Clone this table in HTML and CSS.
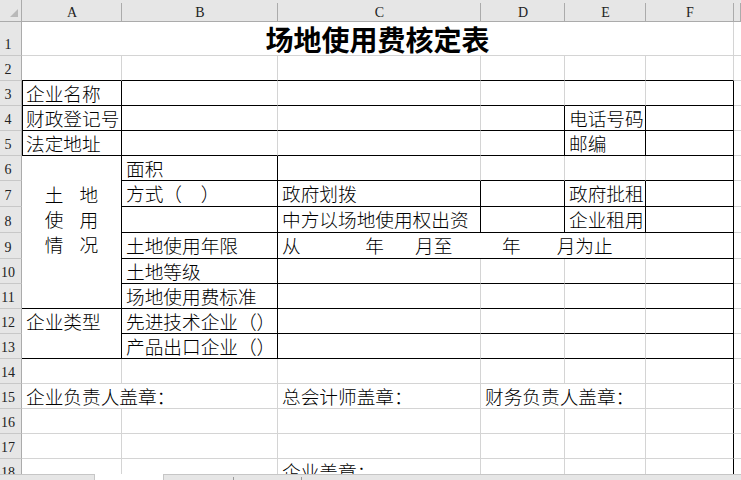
FILE: index.html
```html
<!DOCTYPE html>
<html lang="zh">
<head>
<meta charset="utf-8">
<title>场地使用费核定表</title>
<link rel="stylesheet" href="styles.css">
</head>
<body>
<div class="sheet">
  <div class="grid">
    <div class="corner"><svg width="21" height="21" viewBox="0 0 21 21"><polygon points="18,9 18,17 10,17" fill="#b9b9b9"/></svg></div>
    <div class="ch">A</div><div class="ch">B</div><div class="ch">C</div><div class="ch">D</div><div class="ch">E</div><div class="ch">F</div><div class="ch"></div>

    <div class="rh">1</div>
    <div class="c title">场地使用费核定表</div>
    <div class="c g"></div>

    <div class="rh">2</div>
    <div class="c b"></div><div class="c b"></div><div class="c b"></div><div class="c b"></div><div class="c b"></div><div class="c b"></div><div class="c g"></div>

    <div class="rh">3</div>
    <div class="c l r b">企业名称</div><div class="c b"></div><div class="c b"></div><div class="c b"></div><div class="c b"></div><div class="c r b"></div><div class="c g"></div>

    <div class="rh">4</div>
    <div class="c l r b">财政登记号</div><div class="c b"></div><div class="c b"></div><div class="c r b"></div><div class="c r b">电话号码</div><div class="c r b"></div><div class="c g"></div>

    <div class="rh">5</div>
    <div class="c l r b">法定地址</div><div class="c b"></div><div class="c b"></div><div class="c r b"></div><div class="c r b">邮编</div><div class="c r b"></div><div class="c g"></div>

    <div class="rh">6</div>
    <div class="c r b land">
      <div class="pair"><span>土</span><span>地</span></div>
      <div class="pair"><span>使</span><span>用</span></div>
      <div class="pair"><span>情</span><span>况</span></div>
    </div>
    <div class="c r b">面积</div><div class="c b"></div><div class="c b"></div><div class="c b"></div><div class="c r b"></div><div class="c g"></div>

    <div class="rh">7</div>
    <div class="c r b">方式（　）</div><div class="c r b">政府划拨</div><div class="c r b"></div><div class="c r b">政府批租</div><div class="c r b"></div><div class="c g"></div>

    <div class="rh">8</div>
    <div class="c r b"></div><div class="c r b">中方以场地使用权出资</div><div class="c r b"></div><div class="c r b">企业租用</div><div class="c r b"></div><div class="c g"></div>

    <div class="rh">9</div>
    <div class="c r b">土地使用年限</div>
    <div class="c b span3 period"><span>从</span><span class="p1">年</span><span class="p2">月至</span><span class="p3">年</span><span class="p4">月为止</span></div>
    <div class="c r b"></div><div class="c g"></div>

    <div class="rh">10</div>
    <div class="c r b">土地等级</div><div class="c b"></div><div class="c b"></div><div class="c b"></div><div class="c r b"></div><div class="c g"></div>

    <div class="rh">11</div>
    <div class="c r b">场地使用费标准</div><div class="c b"></div><div class="c b"></div><div class="c b"></div><div class="c r b"></div><div class="c g"></div>

    <div class="rh">12</div>
    <div class="c r b type">企业类型</div>
    <div class="c r b">先进技术企业（）</div><div class="c b"></div><div class="c b"></div><div class="c b"></div><div class="c r b"></div><div class="c g"></div>

    <div class="rh">13</div>
    <div class="c r b">产品出口企业（）</div><div class="c b"></div><div class="c b"></div><div class="c b"></div><div class="c r b"></div><div class="c g"></div>

    <div class="rh">14</div>
    <div class="c"></div><div class="c"></div><div class="c"></div><div class="c"></div><div class="c"></div><div class="c r"></div><div class="c g"></div>

    <div class="rh">15</div>
    <div class="c span2">企业负责人盖章：</div><div class="c">总会计师盖章：</div><div class="c span2">财务负责人盖章：</div><div class="c r"></div><div class="c g"></div>

    <div class="rh">16</div>
    <div class="c"></div><div class="c"></div><div class="c"></div><div class="c"></div><div class="c"></div><div class="c r"></div><div class="c g"></div>

    <div class="rh">17</div>
    <div class="c"></div><div class="c"></div><div class="c"></div><div class="c"></div><div class="c"></div><div class="c r"></div><div class="c g"></div>

    <div class="rh">18</div>
    <div class="c"></div><div class="c"></div><div class="c">企业盖章：</div><div class="c"></div><div class="c"></div><div class="c r"></div><div class="c g"></div>
  </div>
</div>
<div class="footer">
  <div class="f-left"></div>
  <div class="f-gap"></div>
  <div class="f-right"><span class="tick t1"></span><span class="tick t2"></span></div>
</div>
</body>
</html>
```

FILE: styles.css
```css
* {
  box-sizing: border-box;
  margin: 0;
  padding: 0;
}

html, body {
  width: 741px;
  height: 480px;
  overflow: hidden;
  background: #ffffff;
}

body {
  font-family: "Noto Sans CJK SC", "Noto Sans CJK JP", sans-serif;
  color: #000;
}

.sheet {
  height: 474px;
  overflow: hidden;
}

.grid {
  display: grid;
  grid-template-columns: 22px 100px 156px 203px 84px 81px 88px 7px;
  grid-template-rows: 22px 34px repeat(5, 25px) repeat(3, 26px) repeat(9, 25px);
}

.corner {
  background: #e6e6e6;
  border-right: 1px solid #ababab;
  border-bottom: 1px solid #ababab;
}

.corner svg {
  display: block;
}

.ch {
  background-color: #e6e6e6;
  background-image: linear-gradient(#ababab, #ababab);
  background-size: 1px 18px;
  background-position: right bottom;
  background-repeat: no-repeat;
  border-bottom: 1px solid #ababab;
  font-family: "Liberation Serif", serif;
  font-size: 14px;
  line-height: 16px;
  padding-top: 5px;
  text-align: center;
  color: #222;
}

.rh {
  background: #e6e6e6;
  border-right: 1px solid #ababab;
  border-bottom: 1px solid #c8c8c8;
  font-family: "Liberation Serif", serif;
  font-size: 14px;
  line-height: 16px;
  display: flex;
  align-items: flex-end;
  justify-content: center;
  padding-right: 5px;
  padding-bottom: 2px;
  color: #222;
}

.c {
  border-right: 1px solid #d4d4d4;
  border-bottom: 1px solid #d4d4d4;
  font-size: 18.67px;
  font-weight: 300;
  line-height: 24px;
  padding-left: 4px;
  white-space: nowrap;
}

.c.g {
  border-right: none;
}

.c.r {
  border-right-color: #000;
}

.c.b {
  border-bottom-color: #000;
}

.c.l {
  border-left: 1px solid #000;
  padding-left: 3px;
}

.title {
  grid-column: span 6;
  text-align: center;
  font-size: 28px;
  font-weight: 700;
  line-height: 31px;
  padding: 2px 0 0;
}

.span2 {
  grid-column: span 2;
}

.span3 {
  grid-column: span 3;
}

.land {
  grid-row: span 6;
  padding: 25px 0 0;
  display: flex;
  flex-direction: column;
  align-items: center;
}

.pair {
  display: flex;
  gap: 16px;
  line-height: 25px;
}

.type {
  grid-row: span 2;
}

.period {
  display: flex;
}

.period .p1 { margin-left: 64.7px; }
.period .p2 { margin-left: 31px; }
.period .p3 { margin-left: 49.7px; }
.period .p4 { margin-left: 36px; }

.footer {
  height: 6px;
  display: flex;
}

.f-left {
  width: 95px;
  background: #e6e6e6;
  border-top: 1px solid #c6c6c6;
  border-right: 1px solid #c6c6c6;
}

.f-gap {
  width: 68px;
  background: #fff;
}

.f-right {
  flex: 1;
  background: #e6e6e6;
  border-top: 1px solid #c6c6c6;
  border-left: 1px solid #c6c6c6;
  position: relative;
}

.tick {
  position: absolute;
  bottom: 0;
  width: 1px;
  height: 3px;
  background: #9b9b9b;
}

.t1 { left: 69px; }
.t2 { left: 137px; }
```
